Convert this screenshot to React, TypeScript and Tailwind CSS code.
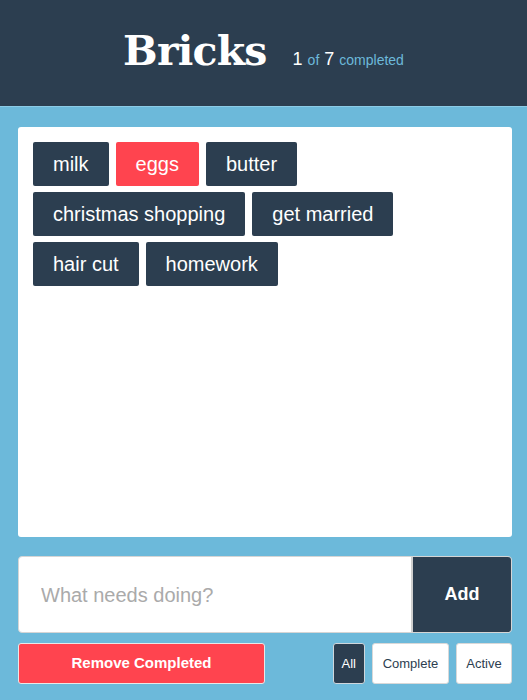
const tags = [
  { text: "milk", done: false },
  { text: "eggs", done: true },
  { text: "butter", done: false },
  { text: "christmas shopping", done: false },
  { text: "get married", done: false },
  { text: "hair cut", done: false },
  { text: "homework", done: false },
];

export default function App() {
  return (
    <div className="min-h-[700px] bg-[#6cb9da] font-['Liberation_Sans',Arial,sans-serif]">
      <header className="h-[107px] bg-[#2c3e50] border-b border-[#8ccbe6] flex items-center justify-center gap-[26px]">
        <h1 className="text-white text-[41px] font-bold font-['DejaVu_Serif',serif] leading-none tracking-[-0.8px] mt-[-3px]">
          Bricks
        </h1>
        <div className="mt-[12px] text-[#6cb9da]">
          <span className="text-white text-[18px]">1</span>
          <span className="text-[14px] mx-[5px]">of</span>
          <span className="text-white text-[18px]">7</span>
          <span className="text-[14px] ml-[5px]">completed</span>
        </div>
      </header>

      <main className="pl-[18px] pr-[15px] pt-[20px] pb-[17px]">
        <div className="h-[410px] bg-white rounded-[3px] px-[15px] py-[15px]">
          <ul className="flex flex-wrap gap-x-[7px] gap-y-[6px]">
            {tags.map((t) => (
              <li
                key={t.text}
                className={`${
                  t.done ? "bg-[#ff444f]" : "bg-[#2c3e50]"
                } h-[44px] px-[20px] flex items-center rounded-[2px] text-white text-[20px]`}>
                {t.text}
              </li>
            ))}
          </ul>
        </div>

        <form className="mt-[19px] h-[77px] flex bg-white rounded-[4px] border border-[#d5d5d5] overflow-hidden">
          <input
            className="flex-1 px-[22px] text-[20px] text-[#555] placeholder:text-[#aaa] outline-none"
            placeholder="What needs doing?"
          />
          <button
            type="button"
            className="w-[100px] bg-[#2c3e50] border-l-2 border-[#cfcfcf] text-white text-[18px] font-bold">
            Add
          </button>
        </form>

        <div className="mt-[10px] flex items-center">
          <button className="w-[247px] h-[41px] bg-[#ff444f] border border-[#e8e8e8] rounded-[3px] text-white text-[15px] font-bold">
            Remove Completed
          </button>
          <div className="ml-auto flex gap-[7px]">
            <button className="h-[41px] px-[8px] bg-[#2c3e50] border border-[#cfd6dc] rounded-[3px] text-white text-[13px]">
              All
            </button>
            <button className="h-[41px] w-[77px] bg-white border border-[#d8d8d8] rounded-[3px] text-[#2c3e50] text-[13px]">
              Complete
            </button>
            <button className="h-[41px] w-[56px] bg-white border border-[#d8d8d8] rounded-[3px] text-[#2c3e50] text-[13px]">
              Active
            </button>
          </div>
        </div>
      </main>
    </div>
  );
}
